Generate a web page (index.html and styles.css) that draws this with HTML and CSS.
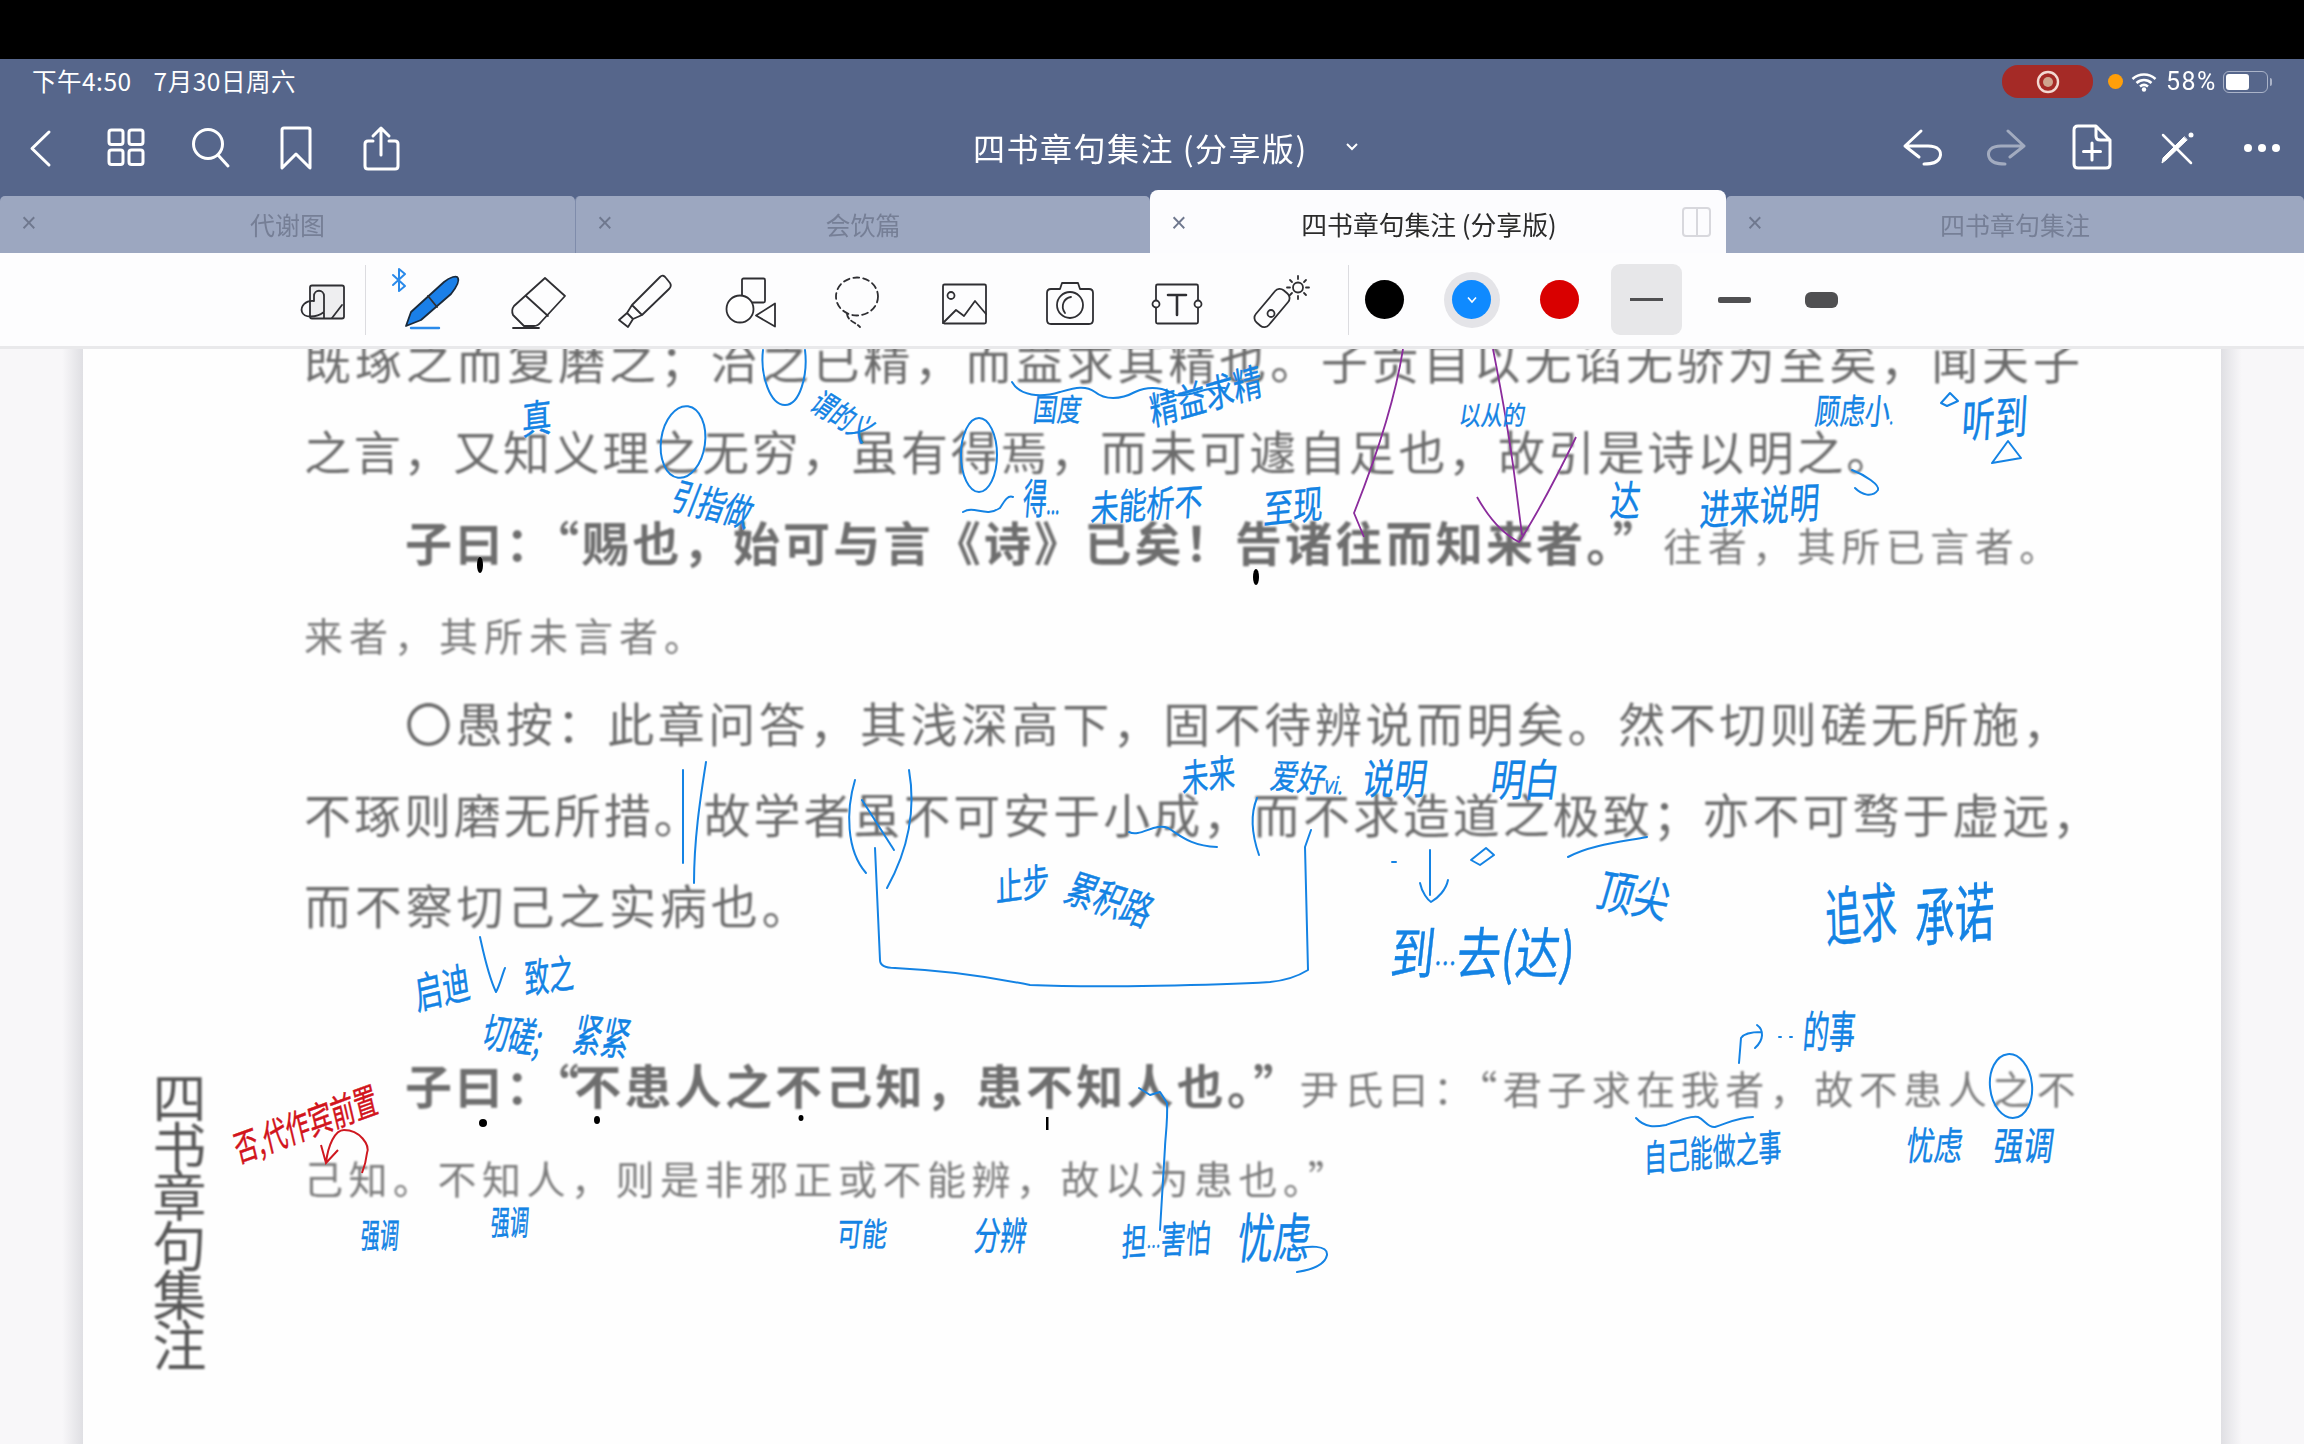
FILE: index.html
```html
<!DOCTYPE html>
<html lang="zh-CN">
<head>
<meta charset="utf-8">
<title>四书章句集注 (分享版)</title>
<link rel="stylesheet" href="styles.css">
</head>
<body>
<div class="topbar"></div>
<header class="header">
  <div class="status">
    <div class="clock"><span>下午4:50</span><span>7月30日周六</span></div>
    <div class="sys">
      <div class="rec"><svg width="26" height="26" viewBox="0 0 26 26"><circle cx="13" cy="13" r="10" fill="none" stroke="#f3d9d2" stroke-width="2.4"/><circle cx="13" cy="13" r="5" fill="#cfa68f"/></svg></div>
      <span class="mic"></span>
      <svg class="wifi" width="26" height="20" viewBox="0 0 26 20"><path d="M1.5 7C8 1 18 1 24.500 7M5.500 11C10 7 16 7 20.500 11M9 14.500C11.500 12.500 14.500 12.500 17 14.500" fill="none" stroke="#fff" stroke-width="2.600"/><circle cx="13" cy="17.500" r="2.200" fill="#fff"/></svg>
      <span class="pct">58%</span>
      <div class="batt"><i></i></div><span class="nub"></span>
    </div>
  </div>
  <div class="nav">
    <div class="navgroup">
      <button class="nb"><svg viewBox="0 0 60 60"><polyline points="38,15 21,31.500 38,48"/></svg></button>
      <button class="nb"><svg viewBox="0 0 60 60"><rect x="13" y="13" width="14" height="14.500" rx="2.500"/><rect x="33" y="13" width="14" height="14.500" rx="2.500"/><rect x="13" y="33" width="14" height="14.500" rx="2.500"/><rect x="33" y="33" width="14" height="14.500" rx="2.500"/></svg></button>
      <button class="nb"><svg viewBox="0 0 60 60"><circle cx="27" cy="27" r="14.500"/><path d="M37 38L47 49"/></svg></button>
      <button class="nb"><svg viewBox="0 0 60 60"><path d="M16 13Q16 11 18 11H42Q44 11 44 13V51L30 37L16 51Z"/></svg></button>
      <button class="nb"><svg viewBox="0 0 60 60"><path d="M22 24H17Q14 24 14 27V49Q14 52 17 52H44Q47 52 47 49V27Q47 24 44 24H38M30 11V38M22 19L30 11L38 19"/></svg></button>
    </div>
    <div class="doctitle"><span>四书章句集注 (分享版)</span><svg width="14" height="10" viewBox="0 0 14 10"><path d="M2 2L7 7L12 2" fill="none" stroke="#fff" stroke-width="2"/></svg></div>
    <div class="navgroup right">
      <button class="nb"><svg viewBox="0 0 60 60"><path d="M29 14L13 29L27 40M13 29H36C46 29 50 34 48 40C46 46 40 47 32 47"/></svg></button>
      <button class="nb dim"><svg viewBox="0 0 60 60"><path d="M31 14L47 29L33 40M47 29H24C14 29 10 34 12 40C14 46 20 47 28 47"/></svg></button>
      <button class="nb"><svg viewBox="0 0 60 60"><path d="M16 9H34L48 23V47Q48 51 44 51H16Q12 51 12 47V13Q12 9 16 9ZM34 9V19Q34 23 38 23H48M30 26V43M21.500 34.500H38.500"/></svg></button>
      <button class="nb"><svg viewBox="0 0 60 60"><path class="thin" d="M16 18L44 46"/><path class="thick" d="M40 23L19 43L15 46L16 41L37 20Z"/><circle class="fillw" cx="44" cy="18" r="2.500"/></svg></button>
      <button class="nb"><svg viewBox="0 0 60 60"><circle class="fillw" cx="16" cy="31" r="4"/><circle class="fillw" cx="30" cy="31" r="4"/><circle class="fillw" cx="44" cy="31" r="4"/></svg></button>
    </div>
  </div>
  <div class="tabs">
    <div class="tab"><span class="x">×</span><span class="tl">代谢图</span><span></span></div>
    <div class="tab"><span class="x">×</span><span class="tl">会饮篇</span><span></span></div>
    <div class="tab active"><span class="x">×</span><span class="tl">四书章句集注 (分享版)</span><span class="split"></span></div>
    <div class="tab last"><span class="x">×</span><span class="tl">四书章句集注</span><span></span></div>
  </div>
</header>

<nav class="tools">
  <div class="tool first"><svg viewBox="0 0 60 60"><rect x="18" y="15.500" width="34" height="33" rx="2" fill="#eeeef0"/><path d="M32 48V26C32 19 22 19 22 26V31M22 31C14 30 8 36 10 42C12 48 24 48 32 42M40 48L50 35" fill="none"/></svg></div>
  <span class="sep"></span>
  <div class="tool"><svg viewBox="0 0 60 60"><path class="bt" d="M-8 5L4 16L-2 21V-1L4 4L-8 15"/><path class="penbody" d="M5 56L10 42L43 12C49 7 56 5 57 8C59 12 54 19 50 24L20 50Z"/><path d="M27 26L36 37" fill="none"/><path class="penline" d="M10 58H38"/></svg></div>
  <div class="tool"><svg viewBox="0 0 60 60"><path d="M37 8L57 26L33 52Q30 56 26 56H16L5 45Q3 40 6 36ZM18 26L40 46M5 58H31" fill="none"/></svg></div>
  <div class="tool"><svg viewBox="0 0 60 60"><path d="M46 7Q49 4 52 8L56 13Q58 16 55 19L28 45L18 35ZM18 35L13 43L19 49L28 45M13 43L5 50L14 57L19 49" fill="none"/></svg></div>
  <div class="tool"><svg viewBox="0 0 60 60"><rect x="21" y="8.500" width="23" height="24" rx="1.500" fill="none"/><circle cx="19" cy="39" r="13.500" fill="#fff"/><path d="M35 45.500L54 33.500V56.500Z" fill="#fff"/></svg></div>
  <div class="tool"><svg viewBox="0 0 60 60"><ellipse cx="30" cy="26.500" rx="21" ry="19" fill="none" stroke-dasharray="6 4"/><path d="M20 44C21 51 28 52 33 57" fill="none" stroke-dasharray="5 3"/></svg></div>
  <div class="tool"><svg viewBox="0 0 60 60"><rect x="9" y="14.500" width="43" height="39" rx="1.500" fill="none"/><circle cx="17" cy="25.500" r="3.500" fill="none"/><path d="M9 53L22 40L30 46L41 31L52 44" fill="none"/></svg></div>
  <div class="tool"><svg viewBox="0 0 60 60"><path d="M11 19H20L22 13H38L40 19H49Q53 19 53 23V50Q53 54 49 54H11Q7 54 7 50V23Q7 19 11 19Z" fill="none"/><circle cx="30" cy="35" r="13" fill="none"/><path d="M25 43C20 36 24 28 31 27" fill="none"/></svg></div>
  <div class="tool"><svg viewBox="0 0 60 60"><rect x="9" y="14.500" width="42" height="39" rx="1.500" fill="none"/><circle cx="9" cy="34" r="3.500" fill="#fff"/><circle cx="51" cy="34" r="3.500" fill="#fff"/><path d="M21 25H39M30 25V45" fill="none" stroke-width="2.600"/></svg></div>
  <div class="tool"><svg viewBox="0 0 60 60"><rect x="-2" y="29.500" width="42" height="17" rx="6" transform="rotate(-50 19 38)" fill="none"/><circle cx="18" cy="43.500" r="3.500" fill="none"/><circle cx="45" cy="17.500" r="5" fill="none"/><path d="M45 6V9M45 26V29M34 17.500H37M53 17.500H56M37 10L39 12M51 23L53 25M53 10L51 12M37 25L39 23" fill="none"/></svg></div>
  <span class="sep two"></span>
  <div class="swatches">
    <div class="cell"><span class="dot black"></span></div>
    <div class="cell"><span class="ring"><span class="dot blue"><svg width="12" height="8" viewBox="0 0 12 8"><path d="M2 1.500L6 6L10 1.500" fill="none" stroke="#fff" stroke-width="1.600"/></svg></span></span></div>
    <div class="cell"><span class="dot red"></span></div>
    <div class="cell"><span class="lw sel"><i class="w1"></i></span></div>
    <div class="cell"><span class="lw"><i class="w2"></i></span></div>
    <div class="cell"><span class="lw"><i class="w3"></i></span></div>
  </div>
</nav>

<main class="sheet">
  <div class="gutter left"></div>
  <section class="paper">
    <aside class="booktitle">四书章句集注</aside>
    <article class="doc">
      <p class="line s-wide">既琢之而复磨之；治之已精，而益求其精也。子贡自以无谄无骄为至矣，闻夫子</p>
      <p class="line s-two">之言，又知义理之无穷，虽有得焉，而未可遽自足也，故引是诗以明之。</p>
      <p class="line ind"><b>子曰：“赐也，始可与言《诗》已矣！告诸往而知来者。”</b><small>往者，其所已言者。</small></p>
      <p class="line"><small class="roomy">来者，其所未言者。</small></p>
      <p class="line ind s-mid">〇愚按：此章问答，其浅深高下，固不待辨说而明矣。然不切则磋无所施，</p>
      <p class="line s-six">不琢则磨无所措。故学者虽不可安于小成，而不求造道之极致；亦不可骛于虚远，</p>
      <p class="line s-wide">而不察切己之实病也。</p>
      <p class="line ind para"><b>子曰：<span class="qn">“</span>不患人之不己知，患不知人也。”</b><small class="pull">尹氏曰：“君子求在我者，故不患人之不</small></p>
      <p class="line"><small>己知。不知人，则是非邪正或不能辨，故以为患也。”</small></p>
    </article>
  </section>
  <div class="gutter right"></div>

  <svg class="ink" viewBox="0 349 2304 1095">
    <g class="strokes">
      <path d="M805 350C808 375 800 405 785 405C770 405 760 375 763 350"/>
      <ellipse cx="683" cy="442" rx="22" ry="36" transform="rotate(8 683 442)"/>
      <ellipse cx="979" cy="455" rx="18" ry="37"/>
      <path d="M1012 382C1020 396 1040 398 1060 392C1075 388 1085 385 1095 392C1105 400 1120 400 1135 392C1150 385 1165 388 1175 395C1190 398 1205 386 1225 388"/>
      <path d="M963 512C975 505 985 518 1000 508C1005 500 1008 495 1013 497"/>
      <path d="M1852 470C1865 475 1880 485 1878 490C1872 498 1862 495 1855 488"/>
      <path d="M1941 403L1950 393L1958 401L1947 406Z"/>
      <path d="M1992 463L2008 441L2021 458Z"/>
      <path d="M683 770V863M706 762C700 800 694 840 694 883"/>
      <path d="M855 780C846 810 846 850 866 873"/>
      <path d="M862 800L894 850"/>
      <path d="M909 770C916 810 908 850 887 888"/>
      <path d="M875 848L880 960Q880 968 895 968C940 970 980 975 1030 985C1100 988 1220 985 1270 982C1290 980 1300 975 1308 970L1305 847L1311 830"/>
      <path d="M1257 798C1250 815 1252 835 1259 855"/>
      <path d="M1129 832C1140 838 1155 822 1168 828C1180 835 1190 846 1217 847"/>
      <path d="M1430 850V895M1420 883C1422 893 1428 900 1431 902C1438 898 1446 890 1448 880"/>
      <path d="M1471 860L1486 848L1494 855L1480 865Z"/>
      <path d="M1392 862H1396"/>
      <path d="M1568 857C1590 845 1620 842 1647 837"/>
      <path d="M480 937C484 955 488 975 496 992C500 985 502 975 505 968"/>
      <path d="M1139 1088L1150 1095L1160 1092L1167 1103C1168 1120 1165 1140 1165 1147L1160 1230"/>
      <path d="M1290 1250C1310 1245 1328 1245 1327 1255C1325 1265 1310 1270 1297 1272"/>
      <path d="M1739 1063L1741 1038C1745 1032 1755 1032 1761 1032M1757 1025C1764 1030 1764 1040 1755 1048"/>
      <path d="M1779 1037H1781M1790 1037H1792"/>
      <path d="M1636 1118C1645 1128 1655 1127 1666 1125C1680 1120 1690 1116 1698 1117C1705 1120 1708 1128 1715 1127C1730 1122 1740 1117 1753 1117"/>
      <ellipse cx="2011" cy="1086" rx="21" ry="32" transform="rotate(-6 2011 1086)"/>
    </g>
    <g class="purple">
      <path d="M1403 349C1395 400 1375 460 1354 513L1364 537"/>
      <path d="M1493 349C1503 400 1510 440 1515 480L1522 535"/>
      <path d="M1477 497C1490 520 1505 535 1519 542C1540 510 1560 470 1576 437"/>
    </g>
    <g class="redstroke">
      <path d="M326 1163C328 1145 335 1130 344 1130C360 1130 370 1145 367 1153C366 1162 364 1168 362 1173M321 1145L326 1163L338 1150"/>
    </g>
    <g class="dots">
      <ellipse cx="480" cy="565" rx="3" ry="8"/>
      <ellipse cx="1256" cy="577" rx="3" ry="8"/>
      <circle cx="483" cy="1123" r="4"/>
      <ellipse cx="597" cy="1120" rx="3" ry="4"/>
      <ellipse cx="801" cy="1118" rx="2.500" ry="3"/>
      <rect x="1046" y="1117" width="2.500" height="13"/>
    </g>
    <g class="hw">
      <text font-size="30" transform="translate(522 435) rotate(-8) scale(1 1.300) skewX(-10)">真</text>
      <text font-size="22" transform="translate(808 408) rotate(32) scale(1 1.400) skewX(-10)">谓的义</text>
      <text font-size="24" transform="translate(1032 421) scale(1 1.300) skewX(-10)">国度</text>
      <text font-size="27" transform="translate(668 508) rotate(14) scale(1 1.400) skewX(-10)">引指做</text>
      <text font-size="30" transform="translate(1022 514) scale(.8 1.400) skewX(-8)">得<tspan font-size="20">...</tspan></text>
      <text font-size="28" transform="translate(1090 522) rotate(-4) scale(1 1.300) skewX(-10)">未能析不</text>
      <text font-size="29" transform="translate(1152 426) rotate(-16) scale(1 1.300) skewX(-10)">精益求精</text>
      <text font-size="22" transform="translate(1458 425) scale(1 1.200) skewX(-10)">以从的</text>
      <text font-size="25" transform="translate(1814 424) scale(1 1.400) skewX(-8)">顾虑小<tspan font-size="14">.</tspan></text>
      <text font-size="33" transform="translate(1961 438) rotate(-4) scale(1 1.400) skewX(-10)">听到</text>
      <text font-size="30" transform="translate(1263 524) rotate(-6) scale(1 1.300) skewX(-10)">至现</text>
      <text font-size="30" transform="translate(1609 516) scale(1 1.400) skewX(-8)">达</text>
      <text font-size="30" transform="translate(1699 526) rotate(-4) scale(1 1.400) skewX(-10)">进来说明</text>
      <text font-size="27" transform="translate(1182 793) rotate(-8) scale(1 1.400) skewX(-10)">未来</text>
      <text font-size="27" transform="translate(996 902) rotate(-8) scale(1 1.400) skewX(-10)">止步</text>
      <text font-size="29" transform="translate(1062 900) rotate(18) scale(1 1.400) skewX(-10)">累积路</text>
      <text font-size="27" transform="translate(1269 788) rotate(5) scale(1 1.300) skewX(-10)">爱好<tspan font-size="18">vi.</tspan></text>
      <text font-size="32" transform="translate(1361 794) scale(1 1.300) skewX(-10)">说明</text>
      <text font-size="34" transform="translate(1489 796) scale(1 1.300) skewX(-10)">明白</text>
      <text font-size="36" transform="translate(1594 906) rotate(10) scale(1 1.300) skewX(-8)">顶尖</text>
      <text font-size="40" transform="translate(1389 974) scale(1.100 1.400) skewX(-8)">到<tspan font-size="20">…</tspan>去(达)</text>
      <text font-size="40" transform="translate(1826 942) rotate(-6) scale(.9 1.600) skewX(-8)">追求</text>
      <text font-size="40" transform="translate(1915 942) rotate(-5) scale(1 1.600) skewX(-8)">承诺</text>
      <text font-size="28" transform="translate(417 1010) rotate(-14) scale(1 1.500) skewX(-10)">启迪</text>
      <text font-size="25" transform="translate(525 994) rotate(-8) scale(1 1.600) skewX(-10)">致之</text>
      <text font-size="26" transform="translate(480 1046) rotate(8) scale(1 1.600) skewX(-10)">切磋;</text>
      <text font-size="28" transform="translate(571 1050) rotate(6) scale(1 1.600) skewX(-10)">紧紧</text>
      <text font-size="19" transform="translate(360 1248) scale(1 1.800) skewX(-8)">强调</text>
      <text font-size="19" transform="translate(490 1235) scale(1 1.800) skewX(-8)">强调</text>
      <text font-size="25" transform="translate(836 1246) scale(1 1.300) skewX(-8)">可能</text>
      <text font-size="26" transform="translate(973 1250) scale(1 1.500) skewX(-10)">分辨</text>
      <text font-size="25" transform="translate(1121 1256) rotate(-3) scale(1 1.500) skewX(-10)">担<tspan font-size="14">…</tspan>害怕</text>
      <text font-size="36" transform="translate(1236 1258) scale(1 1.500) skewX(-10)">忧虑</text>
      <text font-size="26" transform="translate(1802 1048) scale(1 1.700) skewX(-8)">的事</text>
      <text font-size="23" transform="translate(1644 1172) rotate(-5) scale(1 1.600) skewX(-8)">自己能做之事</text>
      <text font-size="28" transform="translate(1905 1160) scale(1 1.400) skewX(-10)">忧虑</text>
      <text font-size="30" transform="translate(1992 1160) scale(1 1.300) skewX(-10)">强调</text>
    </g>
    <text class="hwred" font-size="24" transform="translate(238 1163) rotate(-20) scale(1 1.500) skewX(-10)">否,代作宾前置</text>
  </svg>
</main>
</body>
</html>
```

FILE: styles.css
```css
* { box-sizing: border-box; }
html, body { margin: 0; padding: 0; }
body {
  width: 2304px;
  height: 1444px;
  overflow: hidden;
  background: #fefefe;
  font-family: "Noto Sans CJK SC", "Liberation Sans", sans-serif;
  display: flex;
  flex-direction: column;
}
.topbar { height: 59px; background: #000; flex: none; }

.header { height: 194px; flex: none; background: #56668b; display: flex; flex-direction: column; filter: blur(.4px); }
.status { height: 45px; display: flex; justify-content: space-between; align-items: center; padding: 0 32px; color: #fff; }
.clock { display: flex; gap: 22px; font-size: 24.500px; letter-spacing: .5px; margin-top: -3px; }
.sys { display: flex; align-items: center; }
.rec { width: 91px; height: 33px; border-radius: 16px; background: #a52a26; display: flex; align-items: center; justify-content: center; margin-right: 15px; }
.mic { width: 15px; height: 15px; border-radius: 50%; background: #ff9f0a; margin-right: 8px; }
.wifi { margin-right: 9px; }
.pct { font-family: Roboto, "Liberation Sans", sans-serif; font-size: 25px; width: 51px; margin-right: 6px; letter-spacing: 1.500px; white-space: nowrap; }
.batt { width: 45px; height: 22px; border: 1.500px solid #aab3c8; border-radius: 6px; padding: 2px; }
.batt i { display: block; width: 23px; height: 100%; background: #fff; border-radius: 3px; }
.nub { width: 2px; height: 8px; background: #aab3c8; margin-left: 2px; border-radius: 0 2px 2px 0; }

.nav { height: 85px; display: grid; grid-template-columns: 1fr auto 1fr; align-items: center; }
.navgroup { display: flex; margin-left: -2px; }
.navgroup.right { justify-content: flex-end; margin: 0; }
.nb { width: 85px; height: 60px; padding: 0; border: 0; background: none; display: flex; align-items: center; justify-content: center; }
.nb svg { width: 60px; height: 60px; fill: none; stroke: #fff; stroke-width: 3; stroke-linecap: round; stroke-linejoin: round; }
.nb.dim svg { opacity: .45; }
.nb .thin { stroke-width: 2.500; }
.nb .thick { fill: #fff; stroke-width: 1; }
.nb .fillw { fill: #fff; stroke: none; }
.doctitle { display: flex; align-items: center; gap: 37px; padding-left: 28px; color: #fff; font-size: 32px; letter-spacing: 1.500px; }

.tabs { height: 64px; display: flex; align-items: flex-end; }
.tab { flex: 0 0 575px; height: 57px; padding-bottom: 2px; display: grid; grid-template-columns: 58px 1fr 58px; align-items: center; background: #9ca7c0; color: #767f96; border-radius: 5px 5px 0 0; border-left: 1px solid #7f8cab; text-align: center; }
.tab:first-child { border-left: 0; }
.tab.active { flex: 0 0 576px; height: 63px; padding: 3px 0 0; grid-template-columns: 58px 1fr 76px; background: #fcfcfe; color: #2b2b2b; border: 0; border-radius: 8px 8px 0 0; }
.tab.last { flex: 1; border-left: 0; }
.x { font-size: 27px; font-family: "Liberation Sans", sans-serif; font-weight: 300; color: #6f788e; line-height: 1; }
.tl { font-size: 25px; }
.tab.active .tl { font-size: 25.800px; white-space: nowrap; }
.split { width: 29px; height: 30px; margin: 0 15px 3px 0; border: 2px solid #d8d8dd; border-radius: 4px; justify-self: end; background: linear-gradient(#d8d8dd, #d8d8dd) center / 2px 100% no-repeat; }

.tools { height: 96px; flex: none; display: flex; align-items: center; padding: 0 0 0 279px; background: #fdfdfe; border-bottom: 3px solid #e9e9eb; }
.tool { width: 106.500px; height: 60px; display: flex; justify-content: center; flex: none; }
.tool.first { width: 86px; }
.tool svg { width: 60px; height: 60px; overflow: visible; stroke: #2f2f33; stroke-width: 1.800; stroke-linejoin: round; stroke-linecap: round; }
.sep { width: 1px; height: 70px; background: #dcdce0; margin-right: 12px; flex: none; }
.sep.two { margin: 0 -8px 0 11px; }
.bt { fill: none; stroke: #2a8aea; stroke-width: 2; }
.penbody { fill: #1a7fe8; stroke: #1b2a3a; }
.penline { fill: none; stroke: #2a8aea; stroke-width: 2.400; }
.swatches { display: flex; }
.cell { width: 87.500px; height: 71px; display: flex; align-items: center; justify-content: center; }
.dot { width: 39px; height: 39px; border-radius: 50%; display: flex; align-items: center; justify-content: center; }
.black { background: #000; }
.blue { background: #0f8aff; }
.red { background: #d90000; }
.ring { width: 56px; height: 56px; border-radius: 50%; background: #e4e4e8; display: flex; align-items: center; justify-content: center; }
.lw { width: 71px; height: 71px; border-radius: 9px; display: flex; align-items: center; justify-content: center; }
.lw.sel { background: #e7e7e9; }
.lw i { display: block; width: 33px; background: #505052; }
.w1 { height: 3px; }
.w2 { height: 6px; border-radius: 2px; }
.w3 { height: 16px; border-radius: 6px; }

.sheet { flex: 1; min-height: 0; display: flex; position: relative; overflow: hidden; }
.gutter { background: #f8f7f9; flex: none; }
.gutter.left { width: 83px; background: linear-gradient(90deg, #f8f7f9 75%, #dfdfe3); }
.gutter.right { width: 83px; background: linear-gradient(90deg, #dfdfe3, #f8f7f9 25%); }
.paper { flex: 1; min-width: 0; background: #fefefe; display: grid; grid-template-columns: 221px 1fr; overflow: hidden; }
.booktitle { writing-mode: vertical-rl; justify-self: start; align-self: end; margin: 0 0 77px 68px; font-size: 54px; line-height: 56px; letter-spacing: -4.600px; color: #585858; filter: blur(.8px); }
.doc { margin-top: -35px; filter: blur(.9px); color: #6c6c6c; }
.line { margin: 0; height: 90.800px; line-height: 90.800px; font-size: 47px; letter-spacing: 3.700px; white-space: nowrap; }
.line.s-wide { letter-spacing: 3.850px; }
.line.s-two { letter-spacing: 2.750px; }
.line.s-six { letter-spacing: 2.950px; }
.line.s-mid { letter-spacing: 3.550px; }
.line.ind { padding-left: 101px; }
.line.para { margin-top: 89px; }
.line b { font-weight: 700; letter-spacing: 3.200px; color: #6e6e6e; }
.line small { font-size: 39px; letter-spacing: 5.500px; color: #7c7c7c; }
.line small.roomy { letter-spacing: 6px; }
.line small.pull { margin-left: -4px; }
.qn { margin-right: -8px; }

.ink { position: absolute; left: 0; top: 0; width: 2304px; height: 1095px; pointer-events: none; }
.strokes path, .strokes ellipse { fill: none; stroke: #1483e4; stroke-width: 2; stroke-linecap: round; stroke-linejoin: round; }
.purple path { fill: none; stroke: #8b2c9c; stroke-width: 1.800; }
.redstroke path { fill: none; stroke: #cf1820; stroke-width: 2; }
.dots { fill: #000; }
.hw { fill: #1483e4; stroke: #1483e4; stroke-width: .3; font-family: "Noto Sans CJK SC", sans-serif; font-weight: 400; }
.hwred { fill: #d2141c; stroke: #d2141c; stroke-width: .3; font-family: "Noto Sans CJK SC", sans-serif; }
```
